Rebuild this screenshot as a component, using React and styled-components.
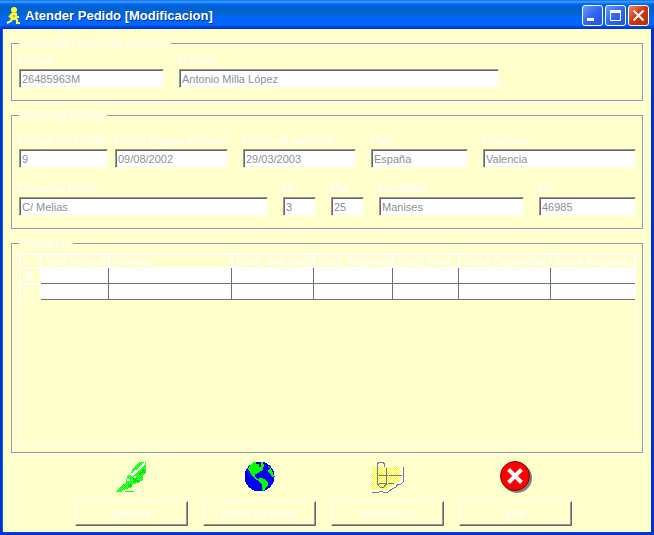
import React from "react";
import styled, { createGlobalStyle, css } from "styled-components";

const cream = "#ffffcc";
const uiFont = '"Liberation Sans", Arial, sans-serif';

const GlobalStyle = createGlobalStyle`
  *, *::before, *::after { box-sizing: border-box; }
  body { margin: 0; background: ${cream}; font: 11px/13px ${uiFont}; }
`;

const Window = styled.div`
  display: flex;
  flex-direction: column;
  min-height: 100vh;
  background: #0033cc;
`;

const TitleBar = styled.header`
  display: flex;
  align-items: center;
  height: 29px;
  padding: 2px 5px 0 6px;
  background: linear-gradient(
    #0058d8 0, #3399ff 1px, #3399ff 2px, #0066ee 4px, #0060d0 7px,
    #0066cc 14px, #0066ff 17px, #0066ff 25px, #0044dd 27px, #0033bb 29px
  );
`;

const Title = styled.h1`
  flex: 1;
  margin: 0 0 0 4px;
  color: #fff;
  font: bold 13px/16px ${uiFont};
  text-shadow: 1px 1px 0 #003399;
  white-space: nowrap;
`;

const Controls = styled.div`
  display: flex;
  gap: 2px;
`;

const ControlButton = styled.button`
  display: block;
  width: 21px;
  height: 21px;
  padding: 0;
  border: 1px solid #fff;
  border-radius: 3px;
  background: ${(p) =>
    p.$danger
      ? "linear-gradient(135deg, #ee8866, #cc3311 50%, #bb3300)"
      : "linear-gradient(135deg, #6699ff, #3366ee 50%, #2255dd)"};
  svg { display: block; }
`;

const Client = styled.main`
  display: flex;
  flex: 1;
  flex-direction: column;
  gap: 8px;
  margin: 0 3px 3px;
  padding: 8px 8px 6px;
  background: ${cream};
  box-shadow: -1px 0 0 #0066ff, 0 1px 0 #0044dd;
`;

const Group = styled.fieldset`
  display: flex;
  flex-direction: column;
  gap: 14px;
  min-width: 0;
  margin: 0;
  padding: ${(p) => p.$top}px 6px ${(p) => p.$bottom}px 7px;
  border: 1px solid #999;
  box-shadow: 1px 1px 0 #fff, inset 1px 1px 0 #fff;
  ${(p) => p.$fill && css`flex: 1;`}
`;

const Legend = styled.legend`
  padding: 0 2px;
  background: ${cream};
  color: #fff;
`;

const Row = styled.div`
  display: flex;
`;

const FieldBox = styled.div`
  display: flex;
  flex: ${(p) => p.$size} 1 0;
  flex-direction: column;
  gap: 2px;
  min-width: 0;
  margin-left: ${(p) => (p.$near ? 7 : 15)}px;
  &:first-child { margin-left: 0; }
`;

const Spacer = styled.div`
  flex: ${(p) => p.$size} 1 0;
  margin-left: 15px;
`;

const Label = styled.label`
  color: #fff;
  white-space: nowrap;
`;

const TextBox = styled.input`
  width: 100%;
  height: 19px;
  padding: 1px 2px;
  border: 1px solid;
  border-color: #999 #fff #fff #999;
  border-radius: 0;
  background: #fff;
  box-shadow: inset 1px 1px 0 #666, inset -1px -1px 0 ${cream};
  color: #909090;
  font: 11px/13px ${uiFont};
`;

const GridFrame = styled.div`
  flex: 1;
  min-height: 193px;
  border: 1px solid #fff;
`;

const Table = styled.table`
  width: 100%;
  table-layout: fixed;
  border-collapse: separate;
  border-spacing: 0;
`;

const HeadCell = styled.th`
  height: 14px;
  padding: 0 0 0 4px;
  overflow: hidden;
  border: 1px solid #fff;
  color: #fff;
  font-weight: normal;
  line-height: 12px;
  text-align: left;
  white-space: nowrap;
`;

const RowHead = styled.th`
  height: 16px;
  padding: 0 0 0 6px;
  border: 1px solid #fff;
  svg { display: block; }
`;

const Cell = styled.td`
  height: 16px;
  padding: 0;
  border-right: 1px solid #7b6878;
  border-bottom: 1px solid #7b6878;
  background: #fff;
  &:last-child { border-right: 0; }
`;

const Actions = styled.div`
  display: flex;
  justify-content: center;
  gap: 15px;
  padding-right: 7px;
`;

const Action = styled.div`
  display: flex;
  flex-direction: column;
  align-items: center;
  gap: 8px;
  width: 113px;
`;

const PushButton = styled.button`
  width: 100%;
  height: 25px;
  padding: 0;
  border: 1px solid;
  border-color: #fff #666 #666 #fff;
  background: ${cream};
  box-shadow: inset -1px -1px 0 #999;
  color: #fff;
  font: 11px/13px ${uiFont};
`;

function Field({ id, label, value, size, near }) {
  return (
    <FieldBox $size={size} $near={near}>
      <Label htmlFor={id}>{label}</Label>
      <TextBox id={id} defaultValue={value} disabled />
    </FieldBox>
  );
}

const RunnerIcon = () => (
  <svg width="15" height="18" viewBox="0 0 15 18" aria-hidden="true">
    <circle cx="8" cy="3" r="3" fill="#ffff33" />
    <path d="M5 6h6v5l-1 2H6l-2-2z" fill="#ffff33" />
    <path d="M6 7L3 10M8 7l3 3h2M9 11l2 2v3h3M6 11l-1 3-4 2" fill="none" stroke="#ffff33" strokeWidth="2" />
    <path d="M7 9h2" stroke="#666600" />
  </svg>
);

const QuillIcon = () => (
  <svg width="32" height="32" viewBox="0 0 32 32" shapeRendering="crispEdges" aria-hidden="true">
    <defs>
      <pattern id="quill" width="2" height="2" patternUnits="userSpaceOnUse">
        <rect width="2" height="2" fill="#55ff44" />
        <path d="M0 0h1v1h-1zM1 1h1v1h-1z" fill="#00ff00" />
      </pattern>
      <pattern id="quillDark" width="2" height="2" patternUnits="userSpaceOnUse">
        <rect width="2" height="2" fill="#00ff00" />
        <path d="M0 1h1v1h-1zM1 0h1v1h-1z" fill="#33bb33" />
      </pattern>
    </defs>
    <path d="M23 1h7v11l-3 2v5l-5 3-5 1-1 3-6 2-5 3H0v-1l7-7 3-1 1-7 4-2 1-4z" fill="url(#quill)" />
    <path d="M29 1v3L18 14l-3 1v-2l9-7 3-4z" fill="#fff" />
    <path d="M14 12h3v2h-3zM11 18h3v2h-3zM18 15h2v2h-2z" fill="#fff" />
    <path d="M26 8h3v4h-3zM23 11h3v3h-3zM17 17h4v4h-4zM12 23h4v3h-4zM21 19h3v2h-3z" fill="url(#quillDark)" />
    <path d="M9 30h9v1H9z" fill="#00ff00" />
  </svg>
);

const GlobeIcon = () => (
  <svg width="32" height="32" viewBox="0 0 32 32" shapeRendering="crispEdges" aria-hidden="true">
    <circle cx="16" cy="16" r="15.5" fill="#fff" />
    <circle cx="15.5" cy="15.5" r="15" fill="#0000ff" />
    <path d="M6 4l4-3 4 1 1 2 4 1v3l-2 2-2 1-1 1-3 1 0 3 2 2 3 0 1 1-2 1-4-2-3-3-2-4-2-2V8z" fill="#00ff00" />
    <path d="M13 18l4-1 3 1 4 3 0 3-2 2-1 3-2 1-1-3v-3l-3-3-2-2z" fill="#00ff00" />
    <path d="M24 5l3 3 2 4 1 4-2 0-1-3-3-2v-2l2-1-2-2z" fill="#00ff00" />
    <path d="M17 1l3 1v4h-3z" fill="#00ff00" />
    <path d="M12 1h3v2h-3zM15 4h2v2h-2zM19 2h2v1h-2z" fill="#000080" />
  </svg>
);

const NoteIcon = () => (
  <svg width="32" height="32" viewBox="0 0 32 32" shapeRendering="crispEdges" aria-hidden="true">
    <defs>
      <pattern id="paper" width="2" height="2" patternUnits="userSpaceOnUse">
        <rect width="2" height="2" fill="#fff" />
        <path d="M0 0h1v1h-1zM1 1h1v1h-1z" fill="#ffff00" />
      </pattern>
    </defs>
    <path d="M0 6h31v15l-2 2h-4l-2 3-4 2-4 3-6-1-4 1H0z" fill="url(#paper)" />
    <path d="M15 5h15v1H15z" fill="#fff" />
    <path d="M30 6v14l-2 2h-3l-2 3-4 2-4 3H9l-1-1-3 1H0" fill="none" stroke="#fff" strokeWidth="2" />
    <path d="M31 6v15l-2 2h-3l-2 3-4 2-4 3h-5l-1-1-3 1H0" fill="none" stroke="#777788" />
    <path d="M7 14h9v1H7zM17 14h13v1H17zM7 22h7v1H7zM16 22h6v1h-6z" fill="#777788" />
    <path d="M12.500 6V3l-2-2h-3l-2 2v20l3 3.500h3l2.500-3V7" fill="none" stroke="#777788" />
  </svg>
);

const CancelIcon = () => (
  <svg width="32" height="32" viewBox="0 0 32 32" aria-hidden="true">
    <circle cx="17" cy="17" r="15" fill="#808080" />
    <circle cx="15" cy="15" r="14.500" fill="#ff0000" stroke="#800000" />
    <path d="M8.500 8.500l13 13M21.500 8.500l-13 13" stroke="#fff" strokeWidth="4" />
  </svg>
);

const columns = [
  ["Cód. Artículo", 68],
  ["Nombre", 123],
  ["Cant. Solicitada", 82],
  ["Cant. Asignada", 79],
  ["Stock Real", 66],
  ["Stock  Disponible", 92],
  ["Stock Asignado", 84],
];
const totalWidth = columns.reduce((sum, c) => sum + c[1], 21);

const Col = styled.col`
  width: ${(p) => (p.$size * 100) / totalWidth}%;
`;

export default function App() {
  return (
    <>
      <GlobalStyle />
      <Window>
        <TitleBar>
          <RunnerIcon />
          <Title>Atender Pedido [Modificacion]</Title>
          <Controls>
            <ControlButton type="button" aria-label="Minimizar">
              <svg width="19" height="19"><path d="M4 13.500h7" stroke="#fff" strokeWidth="3" /></svg>
            </ControlButton>
            <ControlButton type="button" aria-label="Maximizar">
              <svg width="19" height="19"><path d="M4.500 5v9.500h10V5" fill="none" stroke="#fff" /><path d="M4 5.500h11" stroke="#fff" strokeWidth="3" /></svg>
            </ControlButton>
            <ControlButton type="button" aria-label="Cerrar" $danger>
              <svg width="19" height="19"><path d="M4.500 4.500l10 10M14.500 4.500l-10 10" stroke="#fff" strokeWidth="2" /></svg>
            </ControlButton>
          </Controls>
        </TitleBar>
        <Client>
          <Group $top={4} $bottom={12}>
            <Legend>Datos del Técnico de Almacen</Legend>
            <Row>
              <Field id="tecnico" label="Código" value="26485963M" size={145} />
              <Field id="nombre" label="Nombre" value="Antonio Milla López" size={320} />
              <Spacer $size={122} />
            </Row>
          </Group>
          <Group $top={12} $bottom={12}>
            <Legend>Datos del Pedido</Legend>
            <Row>
              <Field id="pedido" label="Código del Pedido" value="9" size={89} />
              <Field id="llegada" label="Fecha llegada almacén" value="09/08/2002" size={113} near />
              <Field id="atencion" label="Fecha de atención" value="29/03/2003" size={113} />
              <Field id="pais" label="País" value="España" size={97} />
              <Field id="provincia" label="Provincia" value="Valencia" size={153} />
            </Row>
            <Row>
              <Field id="direccion" label="Dirección Envío" value="C/ Melias" size={249} />
              <Field id="numero" label="Nº" value="3" size={33} />
              <Field id="puerta" label="Pta" value="25" size={33} />
              <Field id="localidad" label="Localidad" value="Manises" size={145} />
              <Field id="cp" label="CP" value="46985" size={97} />
            </Row>
          </Group>
          <Group $top={3} $bottom={6} $fill>
            <Legend>Productos</Legend>
            <GridFrame>
              <Table>
                <colgroup>
                  <Col $size={21} />
                  {columns.map(([name, size]) => <Col key={name} $size={size} />)}
                </colgroup>
                <thead>
                  <tr>
                    <HeadCell />
                    {columns.map(([name]) => <HeadCell key={name} scope="col">{name}</HeadCell>)}
                  </tr>
                </thead>
                <tbody>
                  {[true, false].map((current, i) => (
                    <tr key={i}>
                      <RowHead scope="row">
                        {current && (
                          <svg width="6" height="11" aria-hidden="true"><path d="M0 0l6 5.500L0 11z" fill="#fff" /></svg>
                        )}
                      </RowHead>
                      {columns.map(([name]) => <Cell key={name} />)}
                    </tr>
                  ))}
                </tbody>
              </Table>
            </GridFrame>
          </Group>
          <Actions>
            <Action><QuillIcon /><PushButton type="button"><u>G</u>uardar</PushButton></Action>
            <Action><GlobeIcon /><PushButton type="button"><u>P</u>asar a Envíos</PushButton></Action>
            <Action><NoteIcon /><PushButton type="button">Incidencia</PushButton></Action>
            <Action><CancelIcon /><PushButton type="button"><u>S</u>alir</PushButton></Action>
          </Actions>
        </Client>
      </Window>
    </>
  );
}
